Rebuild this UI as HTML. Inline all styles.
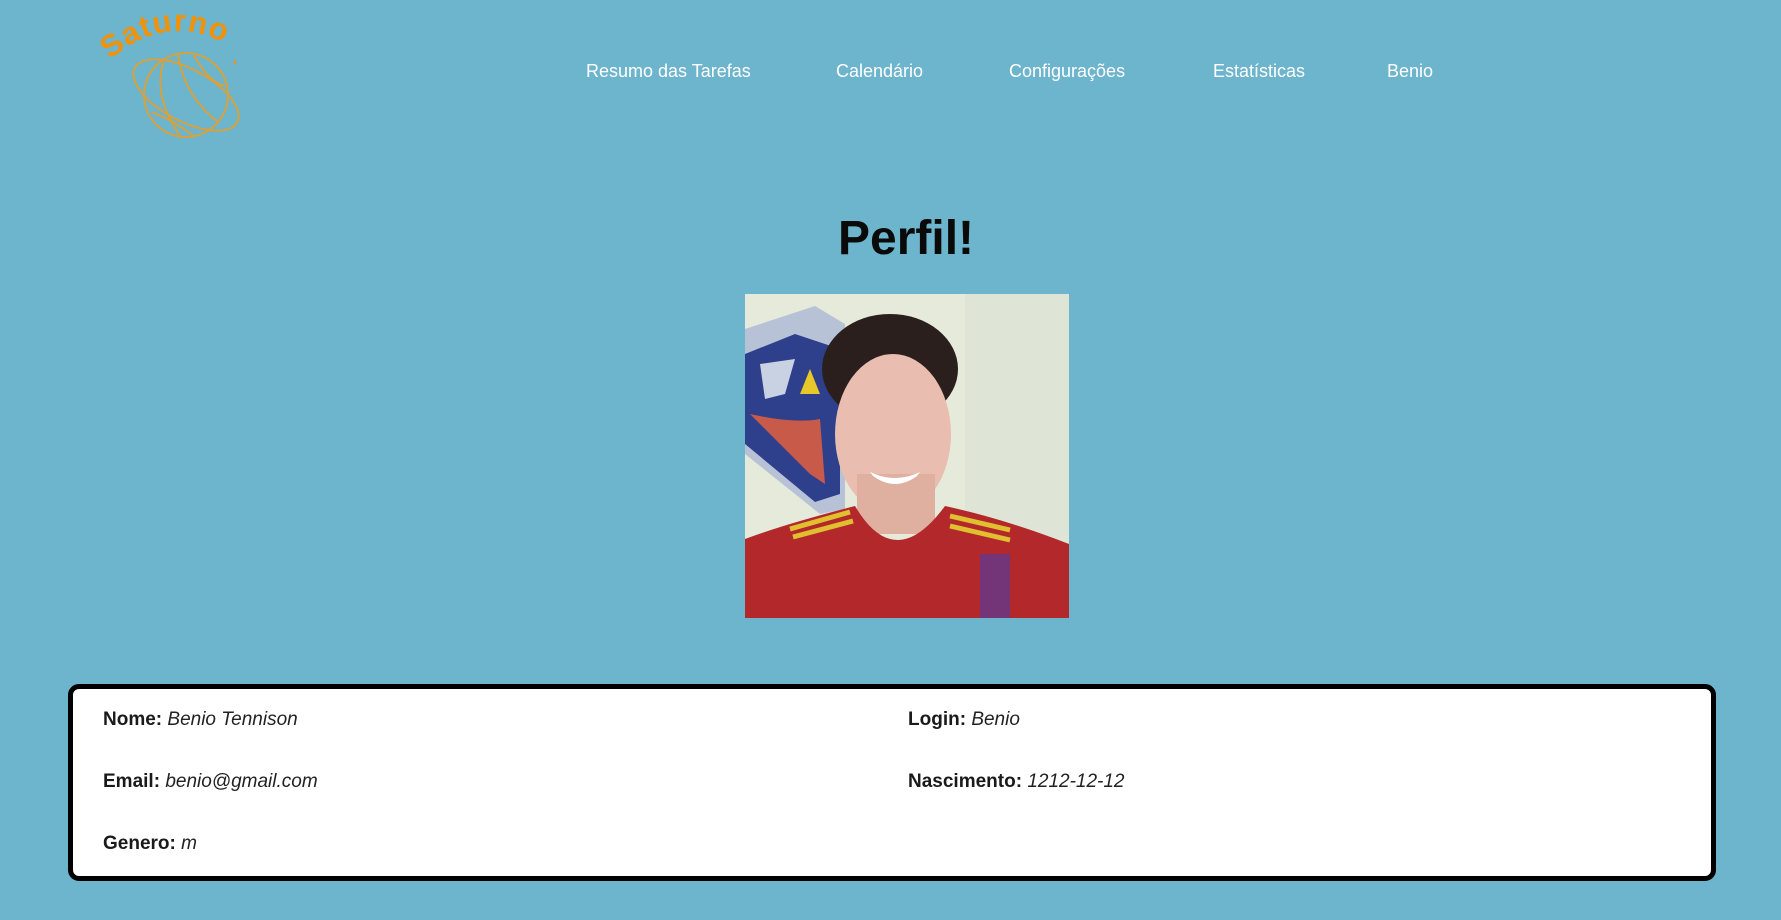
<!DOCTYPE html>
<html><head><meta charset="utf-8"><style>
body{margin:0;width:1781px;height:920px;background:#6db4cd;font-family:"Segoe UI","Liberation Sans",sans-serif;position:relative;overflow:hidden}
.nav{position:absolute;top:61px;color:#fff;font-size:18px;white-space:nowrap}
h1{position:absolute;left:0;width:1812px;text-align:center;top:211px;margin:0;font-size:48px;font-weight:bold;color:#0a0a0a}
.box{position:absolute;left:68px;top:684px;width:1638px;height:187px;border:5px solid #000;border-radius:11px;background:#fff}
.f{position:absolute;font-size:19px;color:#222}
.f b{color:#1a1a1a}
</style></head><body>
<svg style="position:absolute;left:0;top:0" width="300" height="150">
<path id="arc" d="M110 60 Q 172 5 245 55" fill="none"/>
<text font-family="Liberation Sans" font-weight="bold" font-size="31" fill="#f0920a" letter-spacing="1">
<textPath href="#arc">Saturno</textPath></text>
<circle cx="235" cy="62" r="1.5" fill="#f0920a"/>
<g fill="none" stroke="#e0a030" stroke-width="1.8">
<circle cx="186" cy="95" r="42"/>
<ellipse cx="186" cy="95" rx="58" ry="26" transform="rotate(28 186 95)"/>
<path d="M164 60 Q152 95 180 136 M178 54 Q184 96 218 122 M194 55 Q208 82 225 86 M152 112 Q172 120 194 136"/>
</g></svg>
<div class="nav" style="left:586px">Resumo das Tarefas</div>
<div class="nav" style="left:836px">Calendário</div>
<div class="nav" style="left:1009px">Configurações</div>
<div class="nav" style="left:1213px">Estatísticas</div>
<div class="nav" style="left:1387px">Benio</div>
<h1>Perfil!</h1>
<svg style="position:absolute;left:745px;top:294px" width="324" height="324" viewBox="0 0 324 324">
<rect width="324" height="324" fill="#e6eada"/>
<rect x="220" width="104" height="324" fill="#dfe5d6"/>
<polygon points="0,35 70,12 100,30 100,215 75,220 0,160" fill="#b8c2d6"/>
<polygon points="0,60 50,40 95,55 95,200 70,208 0,150" fill="#2e3f8c"/>
<polygon points="15,70 50,65 40,100 20,105" fill="#c9d2e2"/>
<polygon points="65,75 75,100 55,100" fill="#e8c828"/>
<path d="M5 120 Q50 130 75 125 L80 190 L65 180 Z" fill="#c85a4a"/>
<ellipse cx="145" cy="75" rx="68" ry="55" fill="#2a1f1d"/>
<ellipse cx="148" cy="140" rx="58" ry="80" fill="#e9bdb0"/>
<rect x="112" y="180" width="78" height="60" fill="#dfaf9f"/>
<path d="M125 178 Q150 190 175 178 L172 182 Q150 198 128 182Z" fill="#fff"/>
<path d="M0 245 Q40 230 110 212 Q150 280 200 212 Q260 225 324 250 L324 324 L0 324Z" fill="#b3282a"/>
<path d="M45 235 L105 218 M48 243 L108 227 M205 222 L265 236 M205 232 L265 246" stroke="#e0c030" stroke-width="5"/>
<path d="M235 260 L265 260 L265 324 L235 324Z" fill="#5a3a9a" opacity=".7"/>
</svg>
<div class="box"></div>
<div class="f" style="left:103px;top:709px"><b>Nome:</b> <i>Benio Tennison</i></div>
<div class="f" style="left:908px;top:709px"><b>Login:</b> <i>Benio</i></div>
<div class="f" style="left:103px;top:771px"><b>Email:</b> <i>benio@gmail.com</i></div>
<div class="f" style="left:908px;top:771px"><b>Nascimento:</b> <i>1212-12-12</i></div>
<div class="f" style="left:103px;top:833px"><b>Genero:</b> <i>m</i></div>
</body></html>
